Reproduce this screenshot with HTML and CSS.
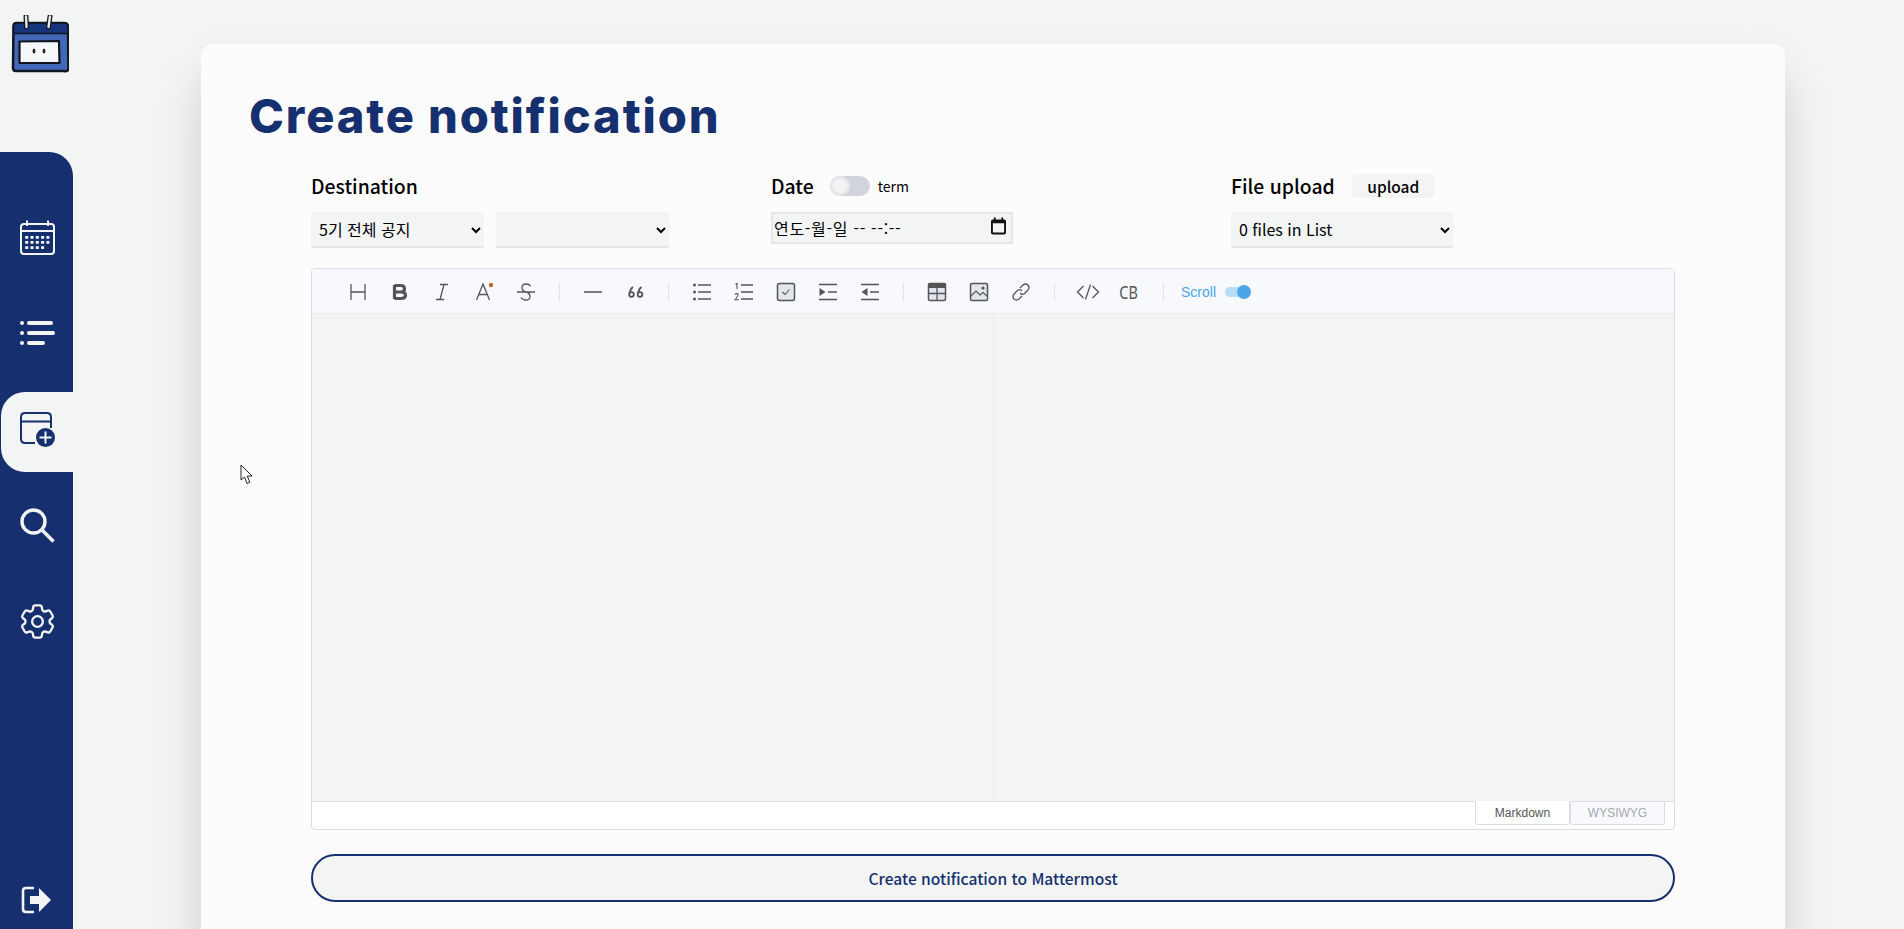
FILE: index.html
```html
<!DOCTYPE html>
<html lang="ko">
	<head>
		<title>Create notification</title>
		<meta charset="utf-8">
		<meta name="viewport" content="width=device-width">
		<link rel="stylesheet" href="styles.css">
	</head>

	<body>
		<aside class="side">
			<svg class="logo" viewBox="0 0 58 58">
				<path d="M2.500 11 Q2.500 8 6 8 L53 8 Q57 8 57 12 L57.500 53 Q57.500 57 53 56 L5 56 Q2 56 2 53 Z" fill="#4169b8" stroke="#10151f" stroke-width="2.500"/>
				<path d="M2.500 11 Q2.500 8 6 8 L53 8 Q57 8 57 12 L57 18.500 L2.500 18.500 Z" fill="#17357c" stroke="#10151f" stroke-width="1.500"/>
				<path d="M15 1.500 L15.500 12 M39 1.500 L37.500 12" stroke="#10151f" stroke-width="5" stroke-linecap="round"/>
				<path d="M15 1.500 L15.500 12 M39 1.500 L37.500 12" stroke="#e4e6e8" stroke-width="2.400" stroke-linecap="round"/>
				<path d="M8.500 26.500 L48 26 L48.500 48 L8.500 48 Z" fill="#f6f7f8" stroke="#10151f" stroke-width="2.200" stroke-linejoin="round"/>
				<ellipse cx="23" cy="36" rx="1.400" ry="2.600" fill="#222"/>
				<ellipse cx="33" cy="36" rx="1.400" ry="2.600" fill="#222"/>
			</svg>

			<nav class="nav">
				<a class="nav-item">
					<svg class="nav-icon" viewBox="0 0 35 35" fill="none" stroke="currentColor" stroke-width="2">
						<rect x="1" y="4" width="33" height="30" rx="3"/>
						<path d="M1 11 H34 M7 0.500 V6 M28 0.500 V6"/>
						<path stroke-width="2.800" stroke-dasharray="3 2.300" d="M5.200 17.300 H30 M5.200 22.300 H30 M5.200 27.600 H24.500"/>
					</svg>
				</a>
				<a class="nav-item">
					<svg class="nav-icon" viewBox="0 0 35 35" fill="currentColor">
						<circle cx="2" cy="7" r="2"/>
						<circle cx="2" cy="17" r="2"/>
						<circle cx="2" cy="27" r="2"/>
						<rect x="7" y="5" width="26" height="4" rx="2"/>
						<rect x="7" y="15" width="28" height="4" rx="2"/>
						<rect x="7" y="25" width="18" height="4" rx="2"/>
					</svg>
				</a>
				<a class="nav-item active">
					<svg class="nav-icon" viewBox="0 0 35 35" fill="none" stroke="currentColor" stroke-width="2">
						<path d="M15 31 H5 Q1 31 1 27 V5 Q1 1 5 1 H27 Q31 1 31 5 V16"/>
						<path d="M1 9.500 H31"/>
						<circle cx="25.500" cy="25.500" r="9.500" fill="currentColor" stroke="none"/>
						<path d="M25.500 19.500 V31.500 M19.500 25.500 H31.500" stroke="#f3f5f5"/>
					</svg>
				</a>
				<a class="nav-item">
					<svg class="nav-icon" viewBox="0 0 35 35" fill="none" stroke="currentColor">
						<circle cx="13.500" cy="13.500" r="11.500" stroke-width="3.400"/>
						<path d="M22 22 L33.500 33.500" stroke-width="3.600"/>
					</svg>
				</a>
				<a class="nav-item">
					<svg class="nav-icon" viewBox="2.200 2.200 19.600 19.600" fill="none" stroke="currentColor" stroke-width="1.300" stroke-linejoin="round">
						<path d="M9.594 3.94c.09-.542.56-.94 1.11-.94h2.593c.55 0 1.02.398 1.11.94l.213 1.281c.063.374.313.686.645.87.074.04.147.083.22.127.325.196.72.257 1.075.124l1.217-.456a1.125 1.125 0 0 1 1.37.49l1.296 2.247a1.125 1.125 0 0 1-.26 1.431l-1.003.827c-.293.241-.438.613-.43.992a7.723 7.723 0 0 1 0 .255c-.008.378.137.75.43.991l1.004.827c.424.35.534.955.26 1.43l-1.298 2.247a1.125 1.125 0 0 1-1.369.491l-1.217-.456c-.355-.133-.75-.072-1.076.124a6.47 6.47 0 0 1-.22.128c-.331.183-.581.495-.644.869l-.213 1.281c-.09.543-.56.94-1.11.94h-2.594c-.55 0-1.019-.398-1.11-.94l-.213-1.281c-.062-.374-.312-.686-.644-.87a6.52 6.52 0 0 1-.22-.127c-.325-.196-.72-.257-1.076-.124l-1.217.456a1.125 1.125 0 0 1-1.369-.49l-1.297-2.247a1.125 1.125 0 0 1 .26-1.431l1.004-.827c.292-.24.437-.613.43-.991a6.932 6.932 0 0 1 0-.255c.007-.38-.138-.751-.43-.992l-1.004-.827a1.125 1.125 0 0 1-.26-1.43l1.297-2.247a1.125 1.125 0 0 1 1.37-.491l1.216.456c.356.133.751.072 1.076-.124.072-.044.146-.086.22-.128.332-.183.582-.495.644-.869l.214-1.28Z"/>
						<circle cx="12" cy="12" r="3"/>
					</svg>
				</a>
			</nav>

			<a class="logout">
				<svg class="logout-icon" viewBox="0 0 30 28">
					<path d="M13 2 H5 Q2 2 2 5 V23 Q2 26 5 26 H13" fill="none" stroke="currentColor" stroke-width="2.600"/>
					<path d="M9 10 H18 V2 L30 14 L18 26 V18 H9 Z" fill="currentColor"/>
				</svg>
			</a>
		</aside>

		<main class="main">
			<section class="card">
				<h1 class="title">Create notification</h1>

				<div class="form">
					<div class="fields">
						<div class="field">
							<div class="field-head"><label class="label">Destination</label></div>
							<div class="field-row">
								<select class="select"><option>5기 전체 공지</option></select>
								<select class="select"><option></option></select>
							</div>
						</div>

						<div class="field">
							<div class="field-head">
								<label class="label">Date</label>
								<span class="toggle"><span class="toggle-dot"></span></span>
								<span class="term">term</span>
							</div>
							<div class="date">
								<span>연도-월-일 -- --:--</span>
								<svg class="date-icon" viewBox="0 0 16 18">
									<path d="M3 0 H5 V2 H11 V0 H13 V2 H14 Q16 2 16 4 V16 Q16 18 14 18 H2 Q0 18 0 16 V4 Q0 2 2 2 H3 Z M2 6 V16 H14 V6 Z" fill="#111"/>
								</svg>
							</div>
						</div>

						<div class="field">
							<div class="field-head">
								<label class="label">File upload</label>
								<button class="upload">upload</button>
							</div>
							<select class="select select-file"><option>0 files in List</option></select>
						</div>
					</div>

					<div class="editor">
						<div class="toolbar">
							<div class="tool-group">
								<span class="tool"><svg viewBox="0 0 20 20"><path d="M3 2 V18 M17 2 V18 M3 10 H17"/></svg></span>
								<span class="tool"><svg viewBox="0 0 20 20"><path class="thick" d="M4.500 3 V17 M4.500 3.500 H11 Q14.500 3.500 14.500 6.700 Q14.500 10 11 10 H4.500 M11 10 Q15.500 10 15.500 13.200 Q15.500 16.500 11 16.500 H4.500"/></svg></span>
								<span class="tool"><svg viewBox="0 0 20 20"><path d="M8 2.500 H16 M4 17.500 H12 M12 2.500 L8 17.500"/></svg></span>
								<span class="tool"><svg viewBox="0 0 20 20"><path d="M2.500 18 L9 2 L15.500 18 M5 12.500 H13"/><circle class="dot" cx="17" cy="3" r="2.200"/></svg></span>
								<span class="tool"><svg viewBox="0 0 20 20"><path d="M1 10 H19 M14.500 4 Q13 2 10 2 Q6 2 6 5.500 Q6 9 10 10 Q14 11 14 14.500 Q14 18 10 18 Q6.500 18 5 15.500"/></svg></span>
							</div>
							<span class="tool-sep"></span>
							<div class="tool-group">
								<span class="tool"><svg viewBox="0 0 20 20"><path d="M1 10 H19"/></svg></span>
								<span class="tool"><svg viewBox="0 0 20 20"><path class="mid" d="M8 5 Q5 7 4.700 11.500 M16.500 5 Q13.500 7 13.200 11.500"/><circle class="ring" cx="6.500" cy="12.500" r="2.300"/><circle class="ring" cx="15" cy="12.500" r="2.300"/></svg></span>
							</div>
							<span class="tool-sep"></span>
							<div class="tool-group">
								<span class="tool"><svg viewBox="0 0 20 20"><circle class="fill" cx="2.500" cy="3" r="1.500"/><circle class="fill" cx="2.500" cy="10" r="1.500"/><circle class="fill" cx="2.500" cy="17" r="1.500"/><path d="M6 3 H19 M6 10 H19 M6 17 H19"/></svg></span>
								<span class="tool"><svg viewBox="0 0 20 20"><path d="M7 3 H19 M7 10 H19 M7 17 H19"/><path class="thin" d="M1.500 2.500 L3 1.500 V7 M1 12.500 Q2.500 11 4 12.200 Q4.500 13.500 1 17.800 H4.800"/></svg></span>
								<span class="tool"><svg viewBox="0 0 20 20"><rect class="box" x="1.500" y="1.500" width="17" height="17" rx="2"/><path class="thin" d="M6.500 10 L9 12.500 L13.500 7.500"/></svg></span>
								<span class="tool"><svg viewBox="0 0 20 20"><path d="M1 2.500 H19 M10 10 H19 M1 17.500 H19"/><path class="fill" d="M1.500 6 L7.500 10 L1.500 14 Z"/></svg></span>
								<span class="tool"><svg viewBox="0 0 20 20"><path d="M1 2.500 H19 M10 10 H19 M1 17.500 H19"/><path class="fill" d="M7.500 6 L1.500 10 L7.500 14 Z"/></svg></span>
							</div>
							<span class="tool-sep"></span>
							<div class="tool-group">
								<span class="tool"><svg viewBox="0 0 20 20"><rect class="box" x="1.500" y="1.500" width="17" height="17" rx="1.500"/><path class="fill" d="M1 2.500 Q1 1 2.500 1 H17.500 Q19 1 19 2.500 V6 H1 Z"/><path d="M10 6 V18 M2 11.500 H18"/></svg></span>
								<span class="tool"><svg viewBox="0 0 20 20"><rect class="box" x="1.500" y="1.500" width="17" height="17" rx="1.500"/><path class="thin" d="M2 14 L7 9 L11 13 L14 10.500 L18 14"/><circle class="fill" cx="14" cy="6" r="1.600"/></svg></span>
								<span class="tool"><svg viewBox="0 0 20 20"><path d="M9 6 L12 3 Q14.500 1 17 3 Q19 5.500 17 8 L13.500 11.500 Q11 13.500 9 11"/><path d="M11 14 L8 17 Q5.500 19 3 17 Q1 14.500 3 12 L6.500 8.500 Q9 6.500 11 9"/></svg></span>
							</div>
							<span class="tool-sep"></span>
							<div class="tool-group">
								<span class="tool"><svg class="code" viewBox="0 0 24 16"><path d="M7.500 2 L1.500 8 L7.500 14 M16.500 2 L22.500 8 L16.500 14 M14.500 0.500 L9.500 15.500"/></svg></span>
								<span class="tool"><span class="tool-cb">CB</span></span>
							</div>
							<span class="tool-sep"></span>
							<span class="scroll-label">Scroll</span>
							<span class="scroll-switch"><span class="scroll-knob"></span></span>
						</div>

						<div class="panes">
							<div class="pane"></div>
							<div class="pane"></div>
						</div>

						<div class="tabs">
							<span class="tab tab-on">Markdown</span>
							<span class="tab">WYSIWYG</span>
						</div>
					</div>

					<button class="submit">Create notification to Mattermost</button>
				</div>
			</section>
		</main>

		<svg class="cursor" viewBox="0 0 14 21">
			<path d="M1 1 V16 L4.500 13 L7 19.500 L9.800 18.300 L7.300 12 H12 Z" fill="#fff" stroke="#222" stroke-width="1"/>
		</svg>
	</body>
</html>
```
FILE: styles.css
```css
* { box-sizing: border-box; }

html, body {
	height: 100%;
}

body {
	margin: 0;
	background: #f3f5f5;
	color: #000;
	font-family: "Noto Sans CJK KR", "Noto Sans", sans-serif;
	overflow: hidden;
	display: flex;
}

/* sidebar */
.side {
	width: 73px;
	flex: none;
	height: 929px;
	display: flex;
	flex-direction: column;
}

.logo {
	width: 58px;
	height: 58px;
	margin: 15px 0 79px 11px;
	flex: none;
}

.nav {
	flex: 1;
	background: #16306f;
	border-top-right-radius: 24px;
	padding-top: 48px;
	display: flex;
	flex-direction: column;
	gap: 16px;
	color: #f3f5f5;
}

.nav-item {
	display: block;
	height: 80px;
	padding: 20px 0 0 20px;
}

.nav-item.active {
	margin-left: 1px;
	padding-left: 19px;
	background: #f3f5f5;
	color: #16306f;
	border-radius: 24px 0 0 24px;
}

.nav-icon {
	display: block;
	width: 35px;
	height: 35px;
}

.logout {
	background: #16306f;
	color: #f3f5f5;
	padding: 0 0 15px 21px;
}

.logout-icon {
	display: block;
	width: 30px;
	height: 28px;
}

/* card */
.main {
	flex: 1;
	min-width: 0;
	padding: 44px 119px 0 128px;
}

.card {
	height: 1000px;
	background: #fcfcfc;
	border-radius: 12px;
	box-shadow: 0 25px 50px -12px rgba(0, 0, 0, .25);
	padding: 45px 110px 0 48px;
}

.title {
	margin: 0;
	font-family: Inter, "Noto Sans", sans-serif;
	font-size: 47px;
	font-weight: 800;
	line-height: 54px;
	color: #16306f;
	letter-spacing: 1.9px;
}

.form {
	margin: 31px 0 0 62px;
}

.fields {
	display: grid;
	grid-template-columns: 460px 460px 1fr;
}

.field-head {
	display: flex;
	align-items: center;
	height: 24px;
	margin-bottom: 14px;
}

.label {
	font-size: 19.4px;
	font-weight: 500;
	line-height: 24px;
}

.field-row {
	display: flex;
	gap: 12px;
}

.select {
	width: 173px;
	height: 36px;
	padding: 0 4px;
	border: 0;
	border-bottom: 2px solid #e5e7eb;
	border-radius: 0;
	background-color: #f3f5f5;
	font-family: inherit;
	font-size: 16px;
	color: #000;
}

.select-file {
	width: 222px;
}

.toggle {
	width: 40px;
	height: 20px;
	margin-left: 16px;
	background: #d1d5db;
	border-radius: 10px;
	display: block;
}

.toggle-dot {
	display: block;
	width: 20px;
	height: 20px;
	border-radius: 50%;
	background: #f3f4f6;
	border: 3px solid #e5e7eb;
}

.term {
	font-size: 14px;
	margin-left: 8px;
}

.date {
	width: 242px;
	height: 32px;
	border: 2px solid #e5e7eb;
	background: #f3f5f5;
	padding: 0 4px 0 1px;
	display: flex;
	align-items: center;
	justify-content: space-between;
	font-size: 16px;
	letter-spacing: .7px;
}

.date-icon {
	width: 15px;
	height: 18px;
	margin: -4px 1px 0 0;
}

.upload {
	margin-left: 17px;
	width: 83px;
	height: 24px;
	border: 0;
	border-radius: 4px;
	background: #f3f5f5;
	font-family: inherit;
	font-size: 15.5px;
	font-weight: 500;
	padding: 0;
	color: #000;
}

/* editor */
.editor {
	width: 1364px;
	height: 562px;
	border: 1px solid #dadde6;
	border-radius: 4px;
	background: #fff;
	margin-top: 20px;
	display: flex;
	flex-direction: column;
	overflow: hidden;
}

.toolbar {
	height: 45px;
	flex: none;
	background: #f7f9fc;
	border-bottom: 1px solid #ebedf2;
	padding: 1px 0 0 25px;
	display: flex;
	align-items: center;
}

.tool-group {
	display: flex;
}

.tool {
	width: 42px;
	height: 24px;
	display: flex;
	align-items: center;
	justify-content: center;
}

.tool svg {
	width: 20px;
	height: 20px;
	fill: none;
	stroke: #555;
	stroke-width: 1.3;
}

.tool svg.code {
	width: 24px;
	height: 16px;
	flex: none;
}

.tool svg .thick { stroke-width: 3.2; }
.tool svg .mid { stroke-width: 1.8; }
.tool svg .thin { stroke-width: 1.1; }
.tool svg .fill { fill: #555; stroke: none; }
.tool svg .ring { stroke-width: 1.8; }
.tool svg .dot { fill: #c8661b; stroke: none; }
.tool svg .box { fill: #e2e5ee; stroke-width: 1.5; }

.tool-cb {
	display: block;
	font-family: "Noto Sans", sans-serif;
	font-size: 18px;
	font-weight: 400;
	color: #555;
	margin-left: -2px;
	transform: scaleX(.8);
}

.tool-sep {
	width: 1px;
	height: 18px;
	margin: 0 12px;
	background: #e1e3e9;
}

.scroll-label {
	font-family: "Liberation Sans", sans-serif;
	font-size: 14px;
	color: #4ba5e9;
	margin-left: 5px;
}

.scroll-switch {
	width: 26px;
	height: 10px;
	margin-left: 9px;
	position: relative;
}

.scroll-switch::before {
	content: "";
	display: block;
	width: 20px;
	height: 10px;
	background: #b5ddf8;
	border-radius: 5px;
}

.scroll-knob {
	position: absolute;
	left: 12px;
	top: -2px;
	width: 14px;
	height: 14px;
	border-radius: 50%;
	background: #4ba5e9;
}

.panes {
	height: 488px;
	flex: none;
	display: grid;
	grid-template-columns: 1fr 1fr;
	background: #f3f5f5;
	border-bottom: 1px solid #dadde6;
}

.pane + .pane {
	border-left: 1px solid #ebedf2;
}

.tabs {
	flex: 1;
	display: flex;
	justify-content: flex-end;
	padding-right: 9px;
	margin-top: -1px;
}

.tab {
	width: 95px;
	height: 24px;
	border: 1px solid #dadde6;
	border-radius: 0 0 3px 3px;
	background: #f7f9fc;
	color: #a6a9b0;
	font-family: "Liberation Sans", sans-serif;
	font-size: 12px;
	display: flex;
	align-items: center;
	justify-content: center;
}

.tab-on {
	background: #fff;
	border-top-color: #fff;
	color: #555;
}

.submit {
	display: block;
	width: 1364px;
	height: 48px;
	margin-top: 24px;
	border: 2px solid #16306f;
	border-radius: 24px;
	background: #f3f5f5;
	color: #16306f;
	font-family: inherit;
	font-size: 15.6px;
	font-weight: 500;
}

.cursor {
	position: absolute;
	left: 240px;
	top: 464px;
	width: 14px;
	height: 21px;
}
```
